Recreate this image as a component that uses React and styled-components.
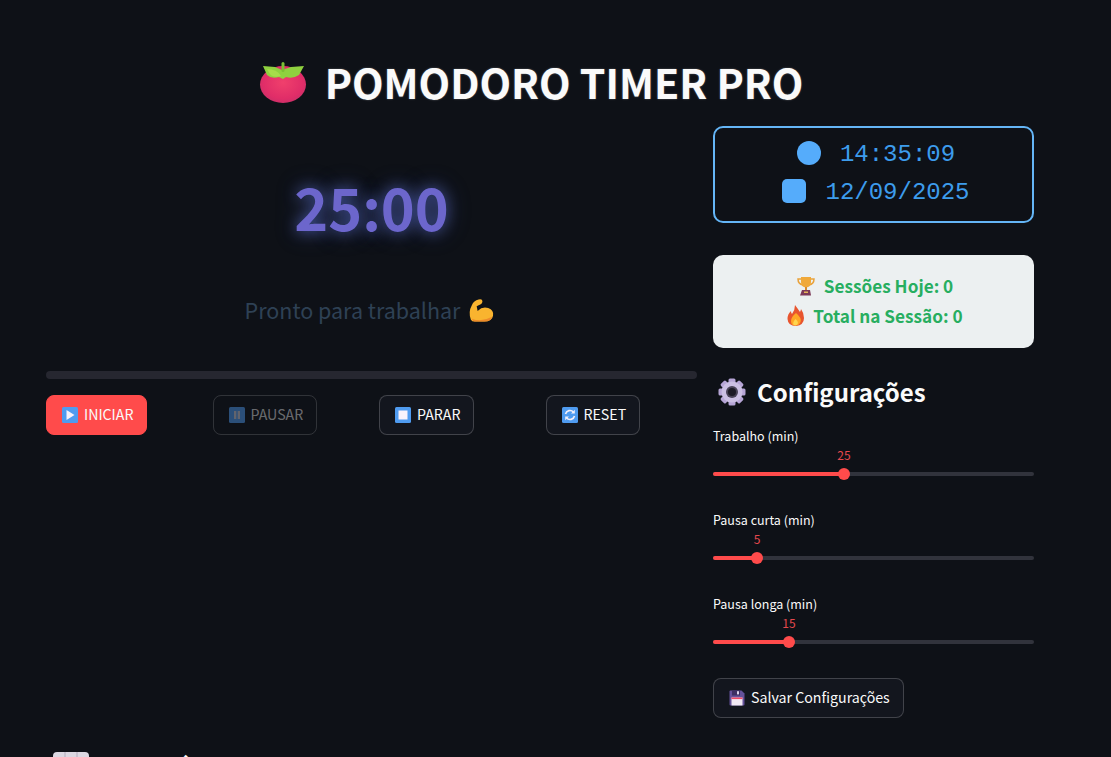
import React from 'react';
import styled, { createGlobalStyle } from 'styled-components';

const GlobalStyle = createGlobalStyle`
	html, body {
		margin: 0;
		height: 757px;
		overflow: hidden;
		background: #0e1117;
	}
	* {
		box-sizing: border-box;
	}
`;

const Page = styled.div`
	height: 757px;
	overflow: hidden;
	padding: 56px 77px 0 46px;
	background: #0e1117;
	color: #fafafa;
	font-family: "Noto Sans CJK SC", "Noto Sans", sans-serif;
`;

const Title = styled.h1`
	display: flex;
	align-items: center;
	justify-content: center;
	gap: 18px;
	height: 50px;
	margin: 0 18px 20px 0;
	font-size: 41px;
	font-weight: 700;
	line-height: 50px;
	color: #fafafa;
	text-shadow: 0 0 2px rgba(250, 250, 250, 0.35);

	svg {
		margin-top: 3px;
	}
`;

const Columns = styled.div`
	display: grid;
	grid-template-columns: 651px 321px;
	gap: 16px;
`;

const LeftColumn = styled.div`
	display: flex;
	flex-direction: column;
`;

const RightColumn = styled.div`
	display: flex;
	flex-direction: column;
`;

const Timer = styled.div`
	margin-top: 40px;
	height: 80px;
	font-size: 57.6px;
	font-weight: 700;
	line-height: 80px;
	text-align: center;
	color: #6c66cc;
	text-shadow: 0 0 14px rgba(102, 126, 234, 0.55), 0 0 24px rgba(102, 126, 234, 0.35);
`;

const Status = styled.div`
	display: flex;
	align-items: center;
	justify-content: center;
	gap: 8px;
	margin-top: 44px;
	height: 40px;
	padding-right: 4px;
	font-size: 21.5px;
	line-height: 40px;
	color: #2e4155;
`;

const Progress = styled.div`
	margin-top: 41px;
	height: 8px;
	border-radius: 4px;
	background: #262730;
`;

const Controls = styled.div`
	display: grid;
	grid-template-columns: repeat(4, 150.5px);
	gap: 16px;
	margin-top: 16px;
`;

const Button = styled.button`
	display: inline-flex;
	align-items: center;
	justify-self: start;
	gap: 6px;
	height: 40px;
	padding: 0 13px 2px 15px;
	border: 1px solid ${props => (props.$primary ? '#ff4b4b' : 'rgba(250, 250, 250, 0.2)')};
	border-radius: 8px;
	background: ${props => (props.$primary ? '#ff4b4b' : '#13161e')};
	color: #fafafa;
	font-family: inherit;
	font-size: 14.2px;
	font-weight: 400;
	line-height: 20px;

	&:disabled {
		background: transparent;
		border-color: rgba(250, 250, 250, 0.15);
		color: rgba(250, 250, 250, 0.4);
	}

	svg {
		margin-top: 2px;
	}
`;

const ClockBox = styled.div`
	display: flex;
	flex-direction: column;
	align-items: center;
	justify-content: center;
	height: 97px;
	padding: 0 0 2px 5px;
	border: 2px solid #64b5f6;
	border-radius: 10px;
	background: #0e1117;
`;

const ClockRow = styled.div`
	display: flex;
	align-items: center;
	gap: 19px;
	height: 38px;
	font-family: "Liberation Mono", monospace;
	font-size: 24px;
	color: #3d9cec;
`;

const ClockDot = styled.span`
	width: 24px;
	height: 24px;
	margin-top: -3px;
	border-radius: ${props => (props.$square ? '5px' : '50%')};
	background: #55acfb;
`;

const StatsBox = styled.div`
	display: flex;
	flex-direction: column;
	align-items: center;
	justify-content: center;
	height: 93px;
	margin-top: 32px;
	padding: 0 0 2px 3px;
	border-radius: 10px;
	background: #ecf0f1;
`;

const StatLine = styled.div`
	display: flex;
	align-items: center;
	gap: 9px;
	height: 30px;
	font-size: 17.2px;
	font-weight: 700;
	color: #27ae60;
`;

const SectionTitle = styled.h2`
	display: flex;
	align-items: center;
	gap: 11px;
	height: 40px;
	margin: 24px 0 0 5px;
	font-size: 24px;
	font-weight: 700;
	line-height: 40px;
	color: #fafafa;
`;

const SliderGroup = styled.div`
	margin-top: 6px;
`;

const SliderBlock = styled.div`
	height: 84px;
	padding-top: 8px;
`;

const SliderLabel = styled.div`
	height: 20px;
	font-size: 12.5px;
	line-height: 20px;
	color: #fafafa;
`;

const SliderTrack = styled.div`
	position: relative;
	height: 4px;
	margin-top: 26px;
	border-radius: 2px;
	background: #31333c;
`;

const SliderFill = styled.div`
	height: 100%;
	border-radius: 2px;
	background: #ff4b4b;
`;

const SliderThumb = styled.div`
	position: absolute;
	top: -4px;
	width: 12px;
	height: 12px;
	margin-left: -6px;
	border-radius: 50%;
	background: #ff4b4b;
`;

const SliderValue = styled.div`
	position: absolute;
	top: -25px;
	transform: translateX(-50%);
	font-size: 12px;
	line-height: 16px;
	color: #e5484d;
`;

const SaveRow = styled.div`
	margin-top: 8px;
`;

const FooterTitle = styled.h2`
	display: flex;
	align-items: center;
	gap: 12px;
	height: 50px;
	margin: 0 0 0 7px;
	font-size: 31px;
	font-weight: 700;
	line-height: 50px;
	color: #fafafa;
`;

const FooterSlot = styled.div`
	margin-top: 27px;
`;

const Tomato = () => (
	<svg width="48" height="41" viewBox="0 3 48 41">
		<defs>
			<radialGradient id="tom" cx="50%" cy="45%" r="62%">
				<stop offset="0%" stopColor="#f0406c" />
				<stop offset="70%" stopColor="#e02d68" />
				<stop offset="100%" stopColor="#c43068" />
			</radialGradient>
		</defs>
		<ellipse cx="24" cy="25.5" rx="23" ry="18.5" fill="url(#tom)" />
		<path d="M4 7 L16 8 L23 11 L32 8 L45 7 L40 16 Q34 20 27 18 L24 20 L20 18 Q12 20 8 16 Z" fill="#8fd13f" />
		<path d="M8 10 Q18 10 22 17 Q14 19 11 15 Z" fill="#a6dc4a" />
		<rect x="22.5" y="3" width="3" height="10" rx="1.5" fill="#7cbf33" />
	</svg>
);

const Muscle = () => (
	<svg width="26" height="25" viewBox="0 0 27 25">
		<path d="M3 22 Q0 14 4 7 Q6 2 11 1 Q15 0 15 3 Q15 6 11 7 L9 8 L10 13 Q15 8 21 10 Q27 12 26 18 Q25 24 17 24 L7 24 Q4 24 3 22 Z" fill="#f9b42f" />
		<path d="M4 21 Q14 25 25 19 Q24 24 17 24 L7 24 Q5 24 4 21 Z" fill="#ee8a2a" />
	</svg>
);

const Trophy = () => (
	<svg width="18" height="20" viewBox="0 0 18 20">
		<path d="M4 3 H1 Q1 8 6 9 M14 3 H17 Q17 8 12 9" fill="none" stroke="#e9a23b" strokeWidth="1.5" />
		<path d="M4 1 H14 V6 Q14 11 9 11.5 Q4 11 4 6 Z" fill="#f0a93a" />
		<rect x="8" y="11" width="2" height="3" fill="#d98a2c" />
		<path d="M5 14 H13 L14 19.5 H3 Z" fill="#7d3a58" />
		<rect x="7" y="15.5" width="4" height="1.5" fill="#e6b65a" />
	</svg>
);

const Flame = () => (
	<svg width="17" height="21" viewBox="0 0 17 21">
		<path d="M8 0 Q11 4 13 7 Q14 5 14 4 Q17 8 17 13 Q17 20 9 21 Q1 21 0.5 14 Q0.5 9 4 6 Q4 8 5 9 Q8 5 8 0 Z" fill="#e8552e" />
		<path d="M9 8 Q15 13 13.5 17 Q12 20.5 8.5 20.5 Q4 20.5 4 16 Q4 12 9 8 Z" fill="#ffa726" />
		<path d="M8.5 14 Q11.5 16.5 10.8 18.5 Q10 20.5 8.5 20.5 Q6 20.5 6.2 18 Q6.5 16 8.5 14 Z" fill="#ffd54f" />
	</svg>
);

const Gear = () => (
	<svg width="28" height="28" viewBox="0 0 28 28">
		{[0, 45, 90, 135, 180, 225, 270, 315].map(angle => (
			<rect key={angle} x="10.5" y="0.5" width="7" height="8" rx="1.5" fill="#b6a5d6" transform={`rotate(${angle} 14 14)`} />
		))}
		<circle cx="14" cy="14" r="10.5" fill="#cbbfe3" />
		<circle cx="14" cy="14" r="6" fill="#4a4458" />
		<circle cx="14" cy="14" r="4" fill="#1d1b26" />
	</svg>
);

const Floppy = () => (
	<svg width="16" height="16" viewBox="0 0 16 16">
		<path d="M1.5 0.5 H12.5 L15.5 3.5 V14.5 Q15.5 15.5 14.5 15.5 H1.5 Q0.5 15.5 0.5 14.5 V1.5 Q0.5 0.5 1.5 0.5 Z" fill="#64519a" />
		<rect x="3" y="0.5" width="8" height="5" fill="#3c2f63" />
		<rect x="8" y="1.2" width="2" height="3.2" fill="#d9d3ea" />
		<rect x="2.5" y="7.5" width="11" height="8" fill="#f1e9f4" />
		<rect x="2.5" y="7.5" width="11" height="1.6" fill="#ef4a66" />
	</svg>
);

const KeyCap = styled.svg`
	flex: none;
	opacity: ${props => (props.$dim ? 0.45 : 1)};
`;

const ButtonIcon = ({ dim, children }) => (
	<KeyCap $dim={dim} width="16" height="16" viewBox="0 0 16 16">
		<rect width="16" height="16" rx="1.5" fill="#4f9bf0" />
		{children}
	</KeyCap>
);

const PlayIcon = () => (
	<ButtonIcon>
		<path d="M4.5 3 L12.5 8 L4.5 13 Z" fill="#f6f1fb" />
	</ButtonIcon>
);

const PauseIcon = () => (
	<ButtonIcon dim>
		<rect x="5" y="4" width="2.3" height="8" fill="#c9c9d6" />
		<rect x="8.7" y="4" width="2.3" height="8" fill="#c9c9d6" />
	</ButtonIcon>
);

const StopIcon = () => (
	<ButtonIcon>
		<rect x="3.5" y="3.5" width="9" height="9" fill="#f8f2fc" />
	</ButtonIcon>
);

const ResetIcon = () => (
	<ButtonIcon>
		<path d="M3.5 7 A4.6 4.6 0 0 1 11.4 5 M12.5 9 A4.6 4.6 0 0 1 4.6 11" fill="none" stroke="#f6f1fb" strokeWidth="1.6" />
		<path d="M12.8 2.8 V6.6 H9 Z M3.2 13.2 V9.4 H7 Z" fill="#f6f1fb" />
	</ButtonIcon>
);

const ChartEmoji = () => (
	<svg width="36" height="36" viewBox="0 0 36 36">
		<rect width="36" height="36" rx="4" fill="#dcd8e2" />
		<path d="M12 0 V36 M24 0 V36" stroke="#b9b4c4" strokeWidth="1.2" />
	</svg>
);

const sliders = [
	{ label: 'Trabalho (min)', value: 25, offset: 131 },
	{ label: 'Pausa curta (min)', value: 5, offset: 44 },
	{ label: 'Pausa longa (min)', value: 15, offset: 76 },
];

const Slider = ({ label, value, offset }) => (
	<SliderBlock>
		<SliderLabel>{label}</SliderLabel>
		<SliderTrack>
			<SliderFill style={{ width: offset }} />
			<SliderThumb style={{ left: offset }} />
			<SliderValue style={{ left: offset }}>{value}</SliderValue>
		</SliderTrack>
	</SliderBlock>
);

export default function App() {
	return (
		<Page>
			<GlobalStyle />
			<Title>
				<Tomato />
				POMODORO TIMER PRO
			</Title>
			<Columns>
				<LeftColumn>
					<Timer>25:00</Timer>
					<Status>
						Pronto para trabalhar
						<Muscle />
					</Status>
					<Progress />
					<Controls>
						<Button $primary>
							<PlayIcon />
							INICIAR
						</Button>
						<Button disabled>
							<PauseIcon />
							PAUSAR
						</Button>
						<Button>
							<StopIcon />
							PARAR
						</Button>
						<Button>
							<ResetIcon />
							RESET
						</Button>
					</Controls>
				</LeftColumn>
				<RightColumn>
					<ClockBox>
						<ClockRow>
							<ClockDot />
							14:35:09
						</ClockRow>
						<ClockRow>
							<ClockDot $square />
							12/09/2025
						</ClockRow>
					</ClockBox>
					<StatsBox>
						<StatLine>
							<Trophy />
							Sessões Hoje: 0
						</StatLine>
						<StatLine>
							<Flame />
							Total na Sessão: 0
						</StatLine>
					</StatsBox>
					<SectionTitle>
						<Gear />
						Configurações
					</SectionTitle>
					<SliderGroup>
						{sliders.map(slider => (
							<Slider key={slider.label} {...slider} />
						))}
					</SliderGroup>
					<SaveRow>
						<Button>
							<Floppy />
							Salvar Configurações
						</Button>
					</SaveRow>
				</RightColumn>
			</Columns>
			<FooterSlot>
				<FooterTitle>
					<ChartEmoji />
					Estatísticas
				</FooterTitle>
			</FooterSlot>
		</Page>
	);
}
